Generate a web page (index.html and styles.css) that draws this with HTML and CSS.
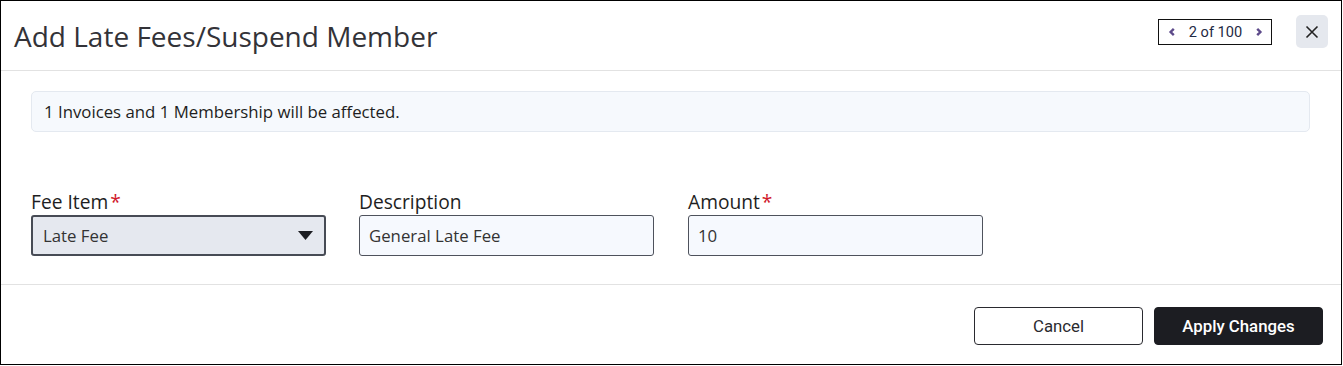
FILE: index.html
```html
<!DOCTYPE html>
<html lang="en">
<head>
<meta charset="utf-8">
<title>Add Late Fees/Suspend Member</title>
<link rel="stylesheet" href="styles.css">
</head>
<body>
<div class="modal">
  <header class="modal-header">
    <h1 class="modal-title">Add Late Fees/Suspend Member</h1>
    <div class="header-actions">
      <div class="pager">
        <svg class="chev" width="8" height="10" viewBox="0 0 8 10"><path d="M5.8 1.8 L2.6 5 L5.8 8.2" fill="none" stroke="#5d4a8a" stroke-width="2.4"/></svg>
        <span class="pager-text">2 of 100</span>
        <svg class="chev" width="8" height="10" viewBox="0 0 8 10"><path d="M2.2 1.8 L5.4 5 L2.2 8.2" fill="none" stroke="#5d4a8a" stroke-width="2.4"/></svg>
      </div>
      <button class="close-btn" aria-label="Close">
        <svg width="14" height="14" viewBox="0 0 14 14"><path d="M1.5 1.5 L12.5 12.5 M12.5 1.5 L1.5 12.5" stroke="#222" stroke-width="1.6" fill="none"/></svg>
      </button>
    </div>
  </header>
  <section class="modal-body">
    <div class="info-box">1 Invoices and 1 Membership will be affected.</div>
    <div class="fields">
      <div class="field">
        <label class="label">Fee Item<span class="req">*</span></label>
        <div class="select">
          <span>Late Fee</span>
          <svg width="15" height="9" viewBox="0 0 15 9"><path d="M0 0 L15 0 L7.5 9 Z" fill="#1c1d22"/></svg>
        </div>
      </div>
      <div class="field">
        <label class="label">Description</label>
        <div class="input">General Late Fee</div>
      </div>
      <div class="field">
        <label class="label">Amount<span class="req">*</span></label>
        <div class="input">10</div>
      </div>
    </div>
  </section>
  <footer class="modal-footer">
    <button class="btn btn-secondary">Cancel</button>
    <button class="btn btn-primary">Apply Changes</button>
  </footer>
</div>
</body>
</html>
```
FILE: styles.css
```css
* { box-sizing: border-box; }
html, body { margin: 0; padding: 0; background: #fff; }
body { font-family: "Open Sans", "Liberation Sans", sans-serif; color: #222; }

.modal {
  width: 1342px;
  height: 365px;
  border: 1px solid #000;
  display: flex;
  flex-direction: column;
  background: #fff;
}

.modal-header {
  height: 70px;
  flex: none;
  border-bottom: 1px solid #e2e2e2;
  display: flex;
  align-items: center;
  justify-content: space-between;
  padding: 0 13px 0 13px;
}
.modal-title {
  margin: 0;
  font-size: 28px;
  line-height: 36px;
  font-weight: 400;
  color: #333338;
}
.header-actions {
  align-self: flex-start;
  margin-top: 14px;
  display: flex;
  align-items: center;
  gap: 24px;
}
.pager {
  width: 114px;
  height: 26px;
  border: 1px solid #111;
  display: flex;
  align-items: center;
  justify-content: space-between;
  padding: 0 8px 0 9px;
}
.pager-text {
  font-family: Roboto, "Liberation Sans", sans-serif;
  font-size: 14.6px;
  color: #1f2a44;
}
.close-btn {
  width: 32px;
  height: 33px;
  border: none;
  border-radius: 5px;
  background: #e5e8ee;
  display: flex;
  align-items: center;
  justify-content: center;
  padding: 0;
}

.modal-body {
  flex: 1;
  padding: 20px 31px 0 30px;
  border-bottom: 1px solid #e2e2e2;
}
.info-box {
  height: 41px;
  background: #f6f9fd;
  border: 1px solid #e4e9f0;
  border-radius: 5px;
  padding: 0 12px;
  display: flex;
  align-items: center;
  font-size: 16.8px;
  color: #1e1e22;
}
.fields {
  display: flex;
  gap: 33px;
  margin-top: 57px;
}
.field {
  width: 295px;
  display: flex;
  flex-direction: column;
}
.field:last-child { margin-left: 1px; }
.label {
  font-size: 19.2px;
  line-height: 26px;
  color: #1e1e22;
}
.req { color: #d0182b; margin-left: 2px; }
.select {
  height: 41px;
  background: #e5e8ef;
  border: 2px solid #474b55;
  border-radius: 3px;
  display: flex;
  align-items: center;
  justify-content: space-between;
  padding: 0 11px 0 10px;
  font-size: 16.8px;
  color: #333;
}
.input {
  height: 41px;
  background: #f6f9fe;
  border: 1px solid #4e525c;
  border-radius: 3px;
  display: flex;
  align-items: center;
  padding: 0 9px;
  font-size: 16.8px;
  color: #333;
}

.modal-footer {
  height: 79px;
  flex: none;
  display: flex;
  justify-content: flex-end;
  align-items: flex-start;
  gap: 11px;
  padding: 22px 18px 0 0;
}
.btn {
  width: 169px;
  height: 38px;
  border-radius: 4px;
  font-family: Roboto, "Liberation Sans", sans-serif;
  font-size: 16.8px;
  cursor: pointer;
}
.btn-secondary {
  background: #fff;
  border: 1px solid #2a2a2f;
  color: #2a2a2f;
}
.btn-primary {
  background: #1c1d22;
  border: 1px solid #1c1d22;
  color: #fff;
  font-weight: 500;
}
```
